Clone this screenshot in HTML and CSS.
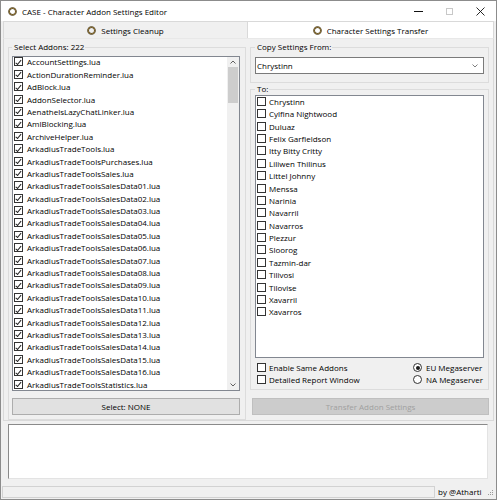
FILE: index.html
```html
<!DOCTYPE html>
<html>
<head>
<meta charset="utf-8">
<link rel="stylesheet" href="styles.css">
</head>
<body>
<div class="window">
  <header class="titlebar">
    <svg class="ring" viewBox="0 0 9 9" width="9" height="9"><circle cx="4.5" cy="4.5" r="3.4" fill="none" stroke="#4a3c20" stroke-width="1.8"/><circle cx="4.5" cy="4.5" r="3.4" fill="none" stroke="#b8994c" stroke-width="0.6"/></svg>
    <span class="title">CASE - Character Addon Settings Editor</span>
    <div class="controls">
      <span class="ctl"><span class="min"></span></span>
      <span class="ctl"><span class="max"></span></span>
      <span class="ctl"><svg viewBox="0 0 9 9" width="9" height="9"><path d="M0.5 0.5 L8.5 8.5 M8.5 0.5 L0.5 8.5" stroke="#111" stroke-width="0.9"/></svg></span>
    </div>
  </header>

  <nav class="tabs">
    <div class="tab">
      <svg class="ring" viewBox="0 0 9 9" width="9" height="9"><circle cx="4.5" cy="4.5" r="3.4" fill="none" stroke="#4a3c20" stroke-width="1.8"/><circle cx="4.5" cy="4.5" r="3.4" fill="none" stroke="#b8994c" stroke-width="0.6"/></svg>
      <span>Settings Cleanup</span>
    </div>
    <div class="tab active">
      <svg class="ring" viewBox="0 0 9 9" width="9" height="9"><circle cx="4.5" cy="4.5" r="3.4" fill="none" stroke="#4a3c20" stroke-width="1.8"/><circle cx="4.5" cy="4.5" r="3.4" fill="none" stroke="#b8994c" stroke-width="0.6"/></svg>
      <span>Character Settings Transfer</span>
    </div>
  </nav>

  <main class="tabpage">
    <fieldset class="group addons">
      <legend>Select Addons: 222</legend>
      <div class="listbox addon-list">
        <div class="items">
          <div class="item"><span class="cb on"></span><span>AccountSettings.lua</span></div>
          <div class="item"><span class="cb on"></span><span>ActionDurationReminder.lua</span></div>
          <div class="item"><span class="cb on"></span><span>AdBlock.lua</span></div>
          <div class="item"><span class="cb on"></span><span>AddonSelector.lua</span></div>
          <div class="item"><span class="cb on"></span><span>AenathelsLazyChatLinker.lua</span></div>
          <div class="item"><span class="cb on"></span><span>AmlBlocking.lua</span></div>
          <div class="item"><span class="cb on"></span><span>ArchiveHelper.lua</span></div>
          <div class="item"><span class="cb on"></span><span>ArkadiusTradeTools.lua</span></div>
          <div class="item"><span class="cb on"></span><span>ArkadiusTradeToolsPurchases.lua</span></div>
          <div class="item"><span class="cb on"></span><span>ArkadiusTradeToolsSales.lua</span></div>
          <div class="item"><span class="cb on"></span><span>ArkadiusTradeToolsSalesData01.lua</span></div>
          <div class="item"><span class="cb on"></span><span>ArkadiusTradeToolsSalesData02.lua</span></div>
          <div class="item"><span class="cb on"></span><span>ArkadiusTradeToolsSalesData03.lua</span></div>
          <div class="item"><span class="cb on"></span><span>ArkadiusTradeToolsSalesData04.lua</span></div>
          <div class="item"><span class="cb on"></span><span>ArkadiusTradeToolsSalesData05.lua</span></div>
          <div class="item"><span class="cb on"></span><span>ArkadiusTradeToolsSalesData06.lua</span></div>
          <div class="item"><span class="cb on"></span><span>ArkadiusTradeToolsSalesData07.lua</span></div>
          <div class="item"><span class="cb on"></span><span>ArkadiusTradeToolsSalesData08.lua</span></div>
          <div class="item"><span class="cb on"></span><span>ArkadiusTradeToolsSalesData09.lua</span></div>
          <div class="item"><span class="cb on"></span><span>ArkadiusTradeToolsSalesData10.lua</span></div>
          <div class="item"><span class="cb on"></span><span>ArkadiusTradeToolsSalesData11.lua</span></div>
          <div class="item"><span class="cb on"></span><span>ArkadiusTradeToolsSalesData12.lua</span></div>
          <div class="item"><span class="cb on"></span><span>ArkadiusTradeToolsSalesData13.lua</span></div>
          <div class="item"><span class="cb on"></span><span>ArkadiusTradeToolsSalesData14.lua</span></div>
          <div class="item"><span class="cb on"></span><span>ArkadiusTradeToolsSalesData15.lua</span></div>
          <div class="item"><span class="cb on"></span><span>ArkadiusTradeToolsSalesData16.lua</span></div>
          <div class="item"><span class="cb on"></span><span>ArkadiusTradeToolsStatistics.lua</span></div>
        </div>
        <div class="scrollbar">
          <span class="arrow"><svg viewBox="0 0 6 4" width="6" height="4"><polyline points="0.5,3.5 3,1 5.5,3.5" fill="none" stroke="#606060" stroke-width="1"/></svg></span>
          <div class="track"><div class="thumb"></div></div>
          <span class="arrow"><svg viewBox="0 0 6 4" width="6" height="4"><polyline points="0.5,0.5 3,3 5.5,0.5" fill="none" stroke="#606060" stroke-width="1"/></svg></span>
        </div>
      </div>
      <button class="btn">Select: NONE</button>
    </fieldset>

    <section class="right">
      <fieldset class="group copy">
        <legend>Copy Settings From:</legend>
        <div class="combo">
          <span>Chrystinn</span>
          <svg viewBox="0 0 6 4" width="6" height="4"><polyline points="0.5,0.5 3,3 5.5,0.5" fill="none" stroke="#707070" stroke-width="0.9"/></svg>
        </div>
      </fieldset>

      <fieldset class="group to">
        <legend>To:</legend>
        <div class="listbox char-list">
          <div class="items">
            <div class="item"><span class="cb"></span><span>Chrystinn</span></div>
            <div class="item"><span class="cb"></span><span>Cylfina Nightwood</span></div>
            <div class="item"><span class="cb"></span><span>Duluaz</span></div>
            <div class="item"><span class="cb"></span><span>Felix Garfieldson</span></div>
            <div class="item"><span class="cb"></span><span>Itty Bitty Critty</span></div>
            <div class="item"><span class="cb"></span><span>Liliwen Thilinus</span></div>
            <div class="item"><span class="cb"></span><span>Littel Johnny</span></div>
            <div class="item"><span class="cb"></span><span>Menssa</span></div>
            <div class="item"><span class="cb"></span><span>Narinia</span></div>
            <div class="item"><span class="cb"></span><span>Navarril</span></div>
            <div class="item"><span class="cb"></span><span>Navarros</span></div>
            <div class="item"><span class="cb"></span><span>Plezzur</span></div>
            <div class="item"><span class="cb"></span><span>Sloorog</span></div>
            <div class="item"><span class="cb"></span><span>Tazmin-dar</span></div>
            <div class="item"><span class="cb"></span><span>Tilivosi</span></div>
            <div class="item"><span class="cb"></span><span>Tilovise</span></div>
            <div class="item"><span class="cb"></span><span>Xavarril</span></div>
            <div class="item"><span class="cb"></span><span>Xavarros</span></div>
          </div>
        </div>
        <div class="options">
          <div class="opt"><span class="cb"></span><span>Enable Same Addons</span></div>
          <div class="opt radio"><span class="rb on"></span><span>EU Megaserver</span></div>
          <div class="opt"><span class="cb"></span><span>Detailed Report Window</span></div>
          <div class="opt radio"><span class="rb"></span><span>NA Megaserver</span></div>
        </div>
      </fieldset>

      <button class="btn disabled">Transfer Addon Settings</button>
    </section>
  </main>

  <div class="output"></div>

  <footer class="status">
    <div class="field"></div>
    <div class="credit">by @Atharti</div>
    <svg class="grip" viewBox="0 0 7 7" width="7" height="7"><g fill="#9a9a9a"><rect x="5" y="0" width="1" height="1"/><rect x="3" y="2" width="1" height="1"/><rect x="5" y="2" width="1" height="1"/><rect x="1" y="4" width="1" height="1"/><rect x="3" y="4" width="1" height="1"/><rect x="5" y="4" width="1" height="1"/></g></svg>
  </footer>
</div>
</body>
</html>
```

FILE: styles.css
```css
* { box-sizing: border-box; }
html, body { margin: 0; padding: 0; }
body {
  width: 497px;
  height: 500px;
  font-family: "Open Sans", "Noto Sans", sans-serif;
  font-size: 8px;
  color: #000;
  background: #fff;
}
.window {
  width: 497px;
  height: 500px;
  border: 1px solid #8c8c8c;
  background: #f0f0f0;
  display: flex;
  flex-direction: column;
}

/* title bar */
.titlebar {
  height: 20px;
  flex: none;
  background: #fff;
  display: flex;
  align-items: center;
  padding-left: 7px;
}
.ring { flex: none; display: block; }
.title { margin-left: 5px; }
.controls { margin-left: auto; display: flex; height: 100%; }
.ctl { width: 31px; height: 100%; display: flex; align-items: center; justify-content: center; }
.min { width: 9px; height: 1px; background: #111; }
.max { width: 7px; height: 7px; border: 1px solid #c8c8c8; }

/* tabs */
.tabs { height: 17px; flex: none; display: flex; padding-left: 2px; }
.tab {
  width: 245px;
  display: flex;
  align-items: center;
  justify-content: center;
  gap: 5px;
  border: 1px solid #d9d9d9;
  border-bottom: none;
  background: #f0f0f0;
}
.tab + .tab { border-left: none; }
.tab.active { width: 246px; background: #fff; }

/* tab page */
.tabpage {
  height: 383px;
  flex: none;
  margin: 0 2px;
  border: 1px solid #d9d9d9;
  border-top-color: #e8e8e8;
  display: flex;
  gap: 4px;
  padding: 3px 4px 0 4px;
}

.group {
  margin: 0;
  min-width: 0;
  border: 1px solid #dcdcdc;
  padding: 0 3px;
  display: flex;
  flex-direction: column;
}
.group legend {
  padding: 0 1px 0 2px;
  margin: 0;
  line-height: 10px;
  height: 10px;
}

.addons { width: 238px; height: 378px; }
.addons .listbox { margin-top: 4px; width: 228px; height: 335px; }

.listbox {
  background: #fff;
  border: 1px solid #828790;
  display: flex;
  overflow: hidden;
}
.items { flex: 1; min-width: 0; overflow: hidden; }
.item {
  height: 12.4px;
  display: flex;
  align-items: flex-start;
  padding: 0.4px 0 0 1px;
  white-space: nowrap;
}
.item span:last-child { line-height: 9px; margin-left: 4px; }
.char-list .item { padding-top: 0.8px; }
.char-list .item span:last-child { margin-left: 3px; }

.cb {
  flex: none;
  width: 9px;
  height: 9px;
  border: 1px solid #333;
  background: #fff;
  position: relative;
}
.cb.on::after {
  content: "";
  position: absolute;
  left: 2.2px;
  top: 0.4px;
  width: 2.4px;
  height: 4.6px;
  border-right: 1px solid #222;
  border-bottom: 1px solid #222;
  transform: rotate(40deg);
}
.rb {
  flex: none;
  width: 9px;
  height: 9px;
  border: 1px solid #333;
  border-radius: 50%;
  background: #fff;
  display: flex;
  align-items: center;
  justify-content: center;
}
.rb.on::after {
  content: "";
  width: 4px;
  height: 4px;
  border-radius: 50%;
  background: #1a1a1a;
}

.scrollbar {
  width: 12px;
  flex: none;
  background: #f0f0f0;
  display: flex;
  flex-direction: column;
}
.arrow { height: 10px; flex: none; display: flex; align-items: center; justify-content: center; }
.track { flex: 1; padding: 0 1px; }
.thumb { height: 36px; background: #cdcdcd; }

.btn {
  font: inherit;
  color: #000;
  margin: 7px 0 0 0;
  padding: 0;
  width: 228px;
  height: 17px;
  background: #e1e1e1;
  border: 1px solid #adadad;
}
.btn.disabled {
  width: 237px;
  margin: 8px 0 0 2px;
  background: #cccccc;
  border-color: #bfbfbf;
  color: #a0a0a0;
}

/* right column */
.right { flex: 1; display: flex; flex-direction: column; min-width: 0; }
.right .group { padding: 0 4px; }
.copy { height: 41px; }
.combo {
  margin-top: 5px;
  width: 229px;
  height: 17px;
  background: #fff;
  border: 1px solid #7a7a7a;
  display: flex;
  align-items: center;
  justify-content: space-between;
  padding: 0 5px 0 1px;
}
.to { margin-top: 1px; height: 306px; }
.to .listbox { margin-top: 1px; width: 229px; height: 263px; }

.options {
  margin-top: 5px;
  display: grid;
  grid-template-columns: 156px 1fr;
  row-gap: 3px;
  padding-left: 2px;
}
.opt { display: flex; align-items: center; gap: 3px; height: 9px; white-space: nowrap; }
.opt.radio { gap: 4px; }

/* output box */
.output {
  flex: none;
  margin: 3px 0 0 7px;
  width: 480px;
  height: 55px;
  background: #fff;
  border: 1px solid #e3e3e3;
  border-top-color: #8a8a8a;
  border-left-color: #8a8a8a;
}

/* status bar */
.status {
  flex: none;
  margin-top: 4px;
  height: 16px;
  display: flex;
  align-items: flex-end;
  padding: 0 1px 1px 1px;
}
.field { width: 433px; height: 12px; border: 1px solid #d2d2d2; }
.credit { margin-left: 3px; height: 12px; line-height: 12px; }
.grip { margin-left: auto; margin-bottom: 1px; margin-right: 1px; }
```
